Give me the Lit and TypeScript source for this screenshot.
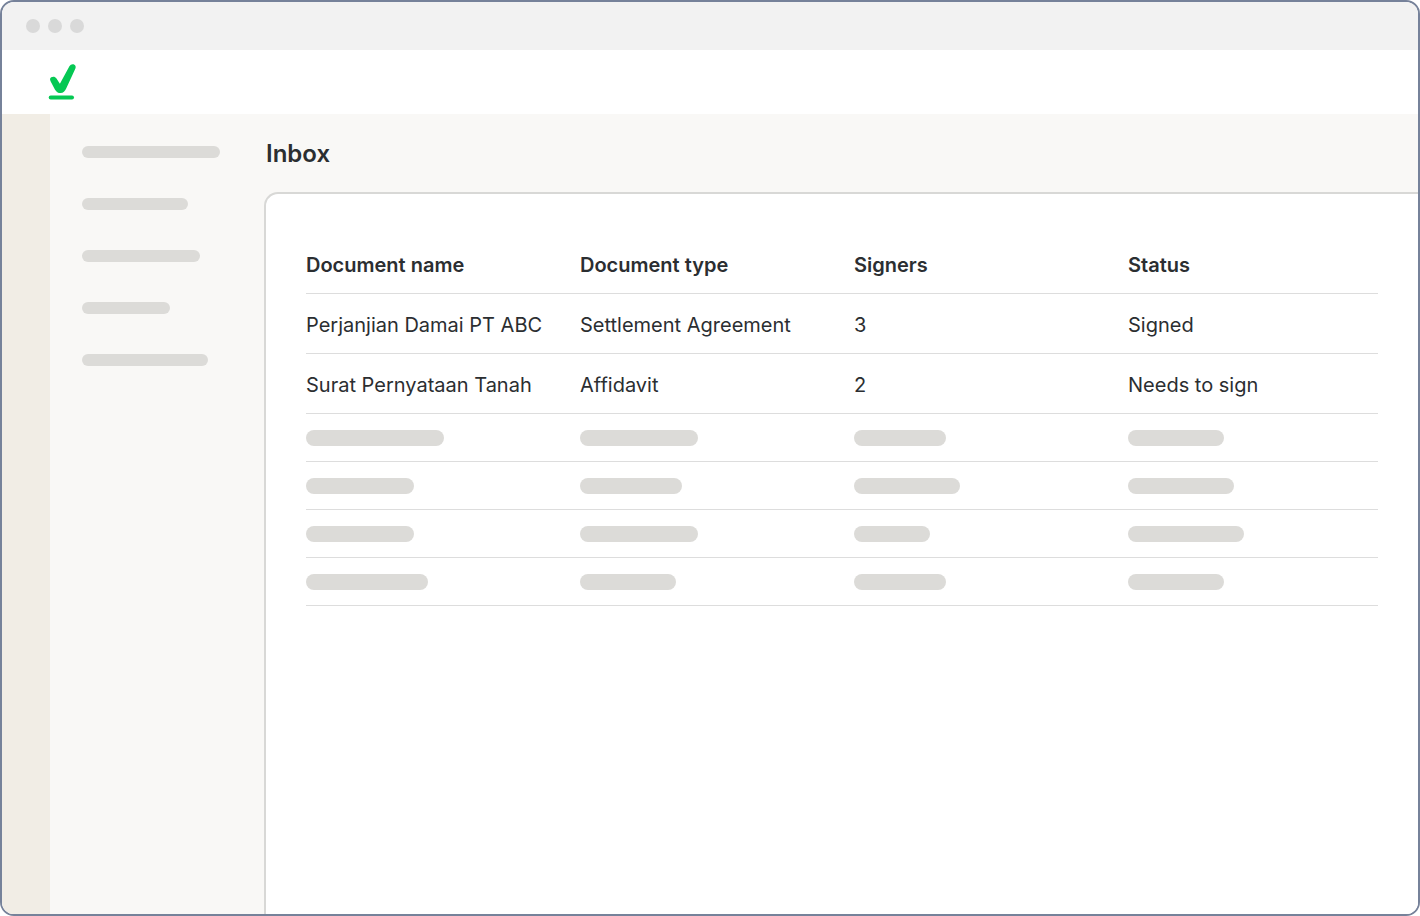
import { LitElement, html, css } from "lit";
import { customElement } from "lit/decorators.js";

const columns = ["Document name", "Document type", "Signers", "Status"];

const documents = [
  ["Perjanjian Damai PT ABC", "Settlement Agreement", "3", "Signed"],
  ["Surat Pernyataan Tanah", "Affidavit", "2", "Needs to sign"],
];

/* Widths of the placeholder bars, row by row. */
const placeholders = [
  [138, 118, 92, 96],
  [108, 102, 106, 106],
  [108, 118, 76, 116],
  [122, 96, 92, 96],
];

const menu = [138, 106, 118, 88, 126];

@customElement("app-root")
export class AppRoot extends LitElement {
  static styles = css`
    :host {
      display: block;
      font-family: Inter, sans-serif;
      color: #2b2e31;
      background: #fff;
    }
    * {
      box-sizing: border-box;
    }
    .window {
      display: flex;
      flex-direction: column;
      min-height: 100vh;
      border: 2px solid #76829a;
      border-radius: 14px;
      overflow: hidden;
      background: #fff;
    }
    .titlebar {
      display: flex;
      align-items: center;
      gap: 8px;
      height: 48px;
      padding: 0 24px;
      background: #f2f2f2;
    }
    .dot {
      width: 14px;
      height: 14px;
      border-radius: 50%;
      background: #d9d9d9;
    }
    .header {
      display: flex;
      align-items: center;
      height: 64px;
      padding: 0 44px;
    }
    .logo {
      display: block;
      width: 32px;
      height: 40px;
    }
    .body {
      flex: 1;
      display: flex;
      background: #f9f8f6;
    }
    .rail {
      width: 48px;
      background: #f1ede5;
    }
    .menu {
      width: 214px;
      margin: 0;
      padding: 32px;
      list-style: none;
      display: flex;
      flex-direction: column;
      gap: 40px;
    }
    .bar {
      display: block;
      height: 16px;
      border-radius: 8px;
      background: #dcdbd8;
    }
    .menu .bar {
      height: 12px;
      border-radius: 6px;
    }
    .main {
      flex: 1;
      min-width: 0;
      display: flex;
      flex-direction: column;
    }
    .title {
      margin: 0;
      padding: 24px 2px 22px;
      font-size: 24px;
      line-height: 32px;
      font-weight: 600;
    }
    .card {
      flex: 1;
      padding: 40px;
      border: solid #d8d8d6;
      border-width: 2px 0 0 2px;
      border-top-left-radius: 14px;
      background: #fff;
    }
    .table {
      display: block;
      font-size: 20px;
      line-height: 30px;
      text-align: left;
    }
    .group {
      display: block;
    }
    .row {
      display: grid;
      grid-template-columns: repeat(4, minmax(0, 1fr));
      column-gap: 24px;
      min-height: 60px;
      padding-top: 16px;
      border-bottom: 1px solid #dddddd;
    }
    .row.empty {
      min-height: 48px;
    }
    .head,
    .cell {
      padding: 0;
      font-weight: 400;
      white-space: nowrap;
    }
    .head {
      font-weight: 600;
    }
  `;

  render() {
    return html`
      <div class="window">
        <div class="titlebar">
          <span class="dot"></span><span class="dot"></span><span class="dot"></span>
        </div>
        <header class="header">
          <svg class="logo" viewBox="0 0 32 40" aria-hidden="true">
            <path
              fill="#05c853"
              d="M5.2 15.3C7 14.1 9.3 14.6 10.3 16.3L13.9 21.8L23.4 4.3C24.5 2.2 26.8 1.7 28.4 2.7C29.8 3.6 30 5.2 29.3 6.8L20.3 26.2C18.9 29.3 17.4 31 14.6 31C12 31 10.3 29.9 8.9 27.4L4.7 19.4C3.7 17.7 3.9 16.2 5.2 15.3Z"
            />
            <rect x="2.7" y="33.4" width="25.3" height="4.2" rx="2" fill="#05c853" />
          </svg>
        </header>
        <div class="body">
          <div class="rail"></div>
          <ul class="menu">
            ${menu.map((w) => html`<li class="item"><span class="bar" style="width:${w}px"></span></li>`)}
          </ul>
          <main class="main">
            <h1 class="title">Inbox</h1>
            <div class="card">
              <table class="table">
                <thead class="group">
                  <tr class="row">
                    ${columns.map((c) => html`<th class="head" scope="col">${c}</th>`)}
                  </tr>
                </thead>
                <tbody class="group">
                  ${documents.map(
                    (row) => html`<tr class="row">
                      ${row.map((text) => html`<td class="cell">${text}</td>`)}
                    </tr>`
                  )}
                  ${placeholders.map(
                    (row) => html`<tr class="row empty">
                      ${row.map((w) => html`<td class="cell"><span class="bar" style="width:${w}px"></span></td>`)}
                    </tr>`
                  )}
                </tbody>
              </table>
            </div>
          </main>
        </div>
      </div>
    `;
  }
}
